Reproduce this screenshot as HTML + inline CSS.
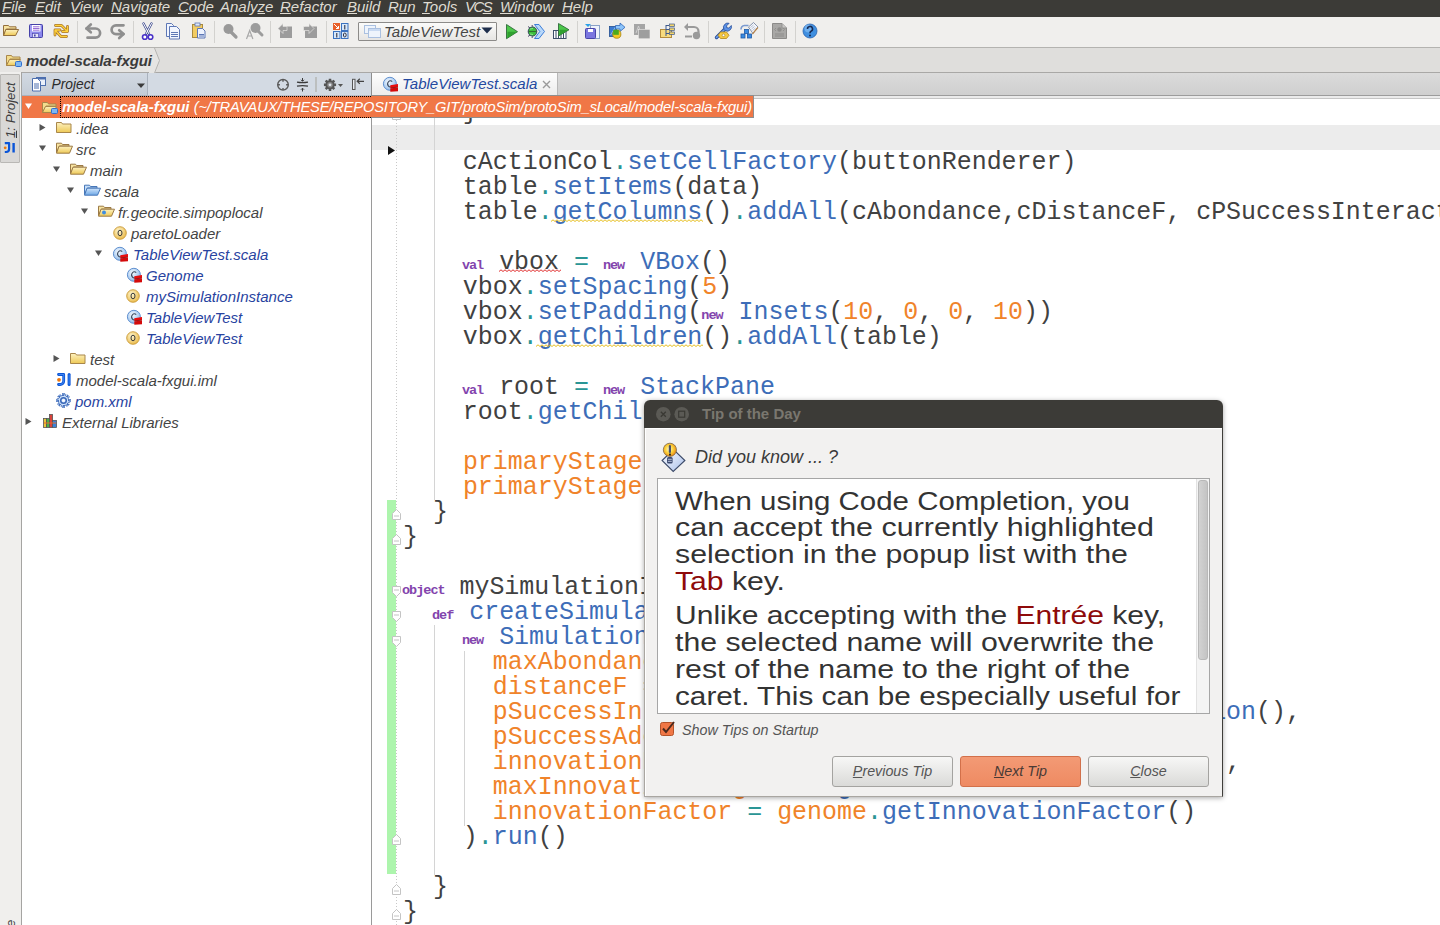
<!DOCTYPE html>
<html><head><meta charset="utf-8">
<style>
*{margin:0;padding:0;box-sizing:border-box}
html,body{width:1440px;height:925px;overflow:hidden;background:#fff;font-family:"Liberation Sans",sans-serif}
.a{position:absolute}
#menu{left:0;top:0;width:1440px;height:17px;background:#3c3b37}
#menu span{position:absolute;top:-1px;font-style:italic;font-size:15px;line-height:16px;color:#dfdbd2;white-space:nowrap}
#menu u{text-decoration:underline;text-underline-offset:1px}
#tb{left:0;top:17px;width:1440px;height:31px;background:#f0efed;border-bottom:1px solid #b4b3b0}
.sep{position:absolute;top:5px;width:1px;height:21px;background:#d6d5d2}
#bc{left:0;top:48px;width:1440px;height:25px;background:#dfdedc;border-bottom:1px solid #a9a8a6}
#strip{left:0;top:72px;width:22px;height:853px;background:#f0efed;border-right:1px solid #a5a4a2}
#ph{left:22px;top:73px;width:349px;height:23px;background:#d3dae3;border-bottom:1px solid #b7bec8}
#tabbar{left:371px;top:73px;width:1069px;height:25px;background:linear-gradient(#dbdbdb,#cfcfcf);border-bottom:3px solid #e6e6e6}
#tabbar:after{content:"";position:absolute;left:0;right:0;top:22px;height:1px;background:#9c9c9c}
#tree{left:22px;top:96px;width:350px;height:829px;background:#fff;border-right:1px solid #9a9a9a}
#editor{left:372px;top:96px;width:1068px;height:829px;background:#fff}
.cl{position:absolute;left:403px;height:25px;font-family:"Liberation Mono",monospace;font-size:24.94px;line-height:25px;white-space:pre;color:#414141}
.cl .k{position:relative;left:-1px;font-size:13.5px;font-weight:bold;letter-spacing:-1px;color:#8344ad;display:inline-block;width:21.3px}
.cl .m{color:#3d6db8}.cl .p{color:#2a9595}.cl .n,.cl .o{color:#f0832a}
.tip{position:absolute;left:675px;height:27px;font:26px/27px "Liberation Sans",sans-serif;color:#333;white-space:nowrap;transform-origin:0 0}
.tip .r{color:#8e0a0a}
.btn{position:absolute;top:756px;height:31px;border:1px solid #a4a3a0;border-radius:3px;background:linear-gradient(#f7f7f6,#dadad8);font:italic 14.3px/29px "Liberation Sans",sans-serif;color:#555;text-align:center;white-space:nowrap}
.btn.nx{background:linear-gradient(#f39a75,#ee8a62);border-color:#d2704a;color:#4a3a35}
</style></head><body>
<svg width="0" height="0" style="position:absolute">
<defs>
<linearGradient id="gy" x1="0" y1="0" x2="0" y2="1"><stop offset="0" stop-color="#fdf1c0"/><stop offset="1" stop-color="#eec956"/></linearGradient>
<linearGradient id="gb" x1="0" y1="0" x2="0" y2="1"><stop offset="0" stop-color="#cfe4fb"/><stop offset="1" stop-color="#6fa8e6"/></linearGradient>
<radialGradient id="go" cx=".4" cy=".35" r=".7"><stop offset="0" stop-color="#fff6cf"/><stop offset="1" stop-color="#e9b845"/></radialGradient>
<radialGradient id="gc" cx=".4" cy=".35" r=".7"><stop offset="0" stop-color="#f4f9ff"/><stop offset="1" stop-color="#8ab8ea"/></radialGradient>
<symbol id="fclosed" viewBox="0 0 16 12"><path d="M.5 1.5h5l1 1.5h8.5v8.5h-14.5z" fill="url(#gy)" stroke="#a9874a"/></symbol>
<symbol id="fopen" viewBox="0 0 17 12"><path d="M.5 1.2h5l1 1.3h6.5v1.5H3.5L.5 10.5z" fill="#f7e3a0" stroke="#9c7a46"/><path d="M3 4.2h13.5l-3 7h-13z" fill="url(#gy)" stroke="#9c7a46"/></symbol>
<symbol id="fblue" viewBox="0 0 17 12"><path d="M.5 1.2h5l1 1.3h6.5v1.5H3.5L.5 10.5z" fill="#c4ddf8" stroke="#4777b8"/><path d="M3 4.2h13.5l-3 7h-13z" fill="url(#gb)" stroke="#4777b8"/></symbol>
<symbol id="fpkg" viewBox="0 0 17 12"><path d="M.5 1.2h5l1 1.3h6.5v1.5H3.5L.5 10.5z" fill="#f7e3a0" stroke="#9c7a46"/><path d="M3 4.2h13.5l-3 7h-13z" fill="url(#gy)" stroke="#9c7a46"/><circle cx="6" cy="7.6" r="2" fill="#3f8de0"/></symbol>
<symbol id="fmod" viewBox="0 0 16 13"><path d="M.5 1.5h5l1 1.5h7.5v2H4L.5 11.5z" fill="#f3dc8c" stroke="#a9874a"/><path d="M3.5 5.5h11l-3 6h-11z" fill="url(#gy)" stroke="#a9874a"/><rect x="9.5" y="7.5" width="6" height="5" rx="1" fill="#7fb8f2" stroke="#2f6fd0"/></symbol>
<symbol id="iobj" viewBox="0 0 14 14"><circle cx="7" cy="7" r="6.3" fill="url(#go)" stroke="#c99a3a" stroke-width=".9"/><ellipse cx="7" cy="7" rx="2" ry="2.8" fill="none" stroke="#3a3a3a" stroke-width="1"/></symbol>
<symbol id="icls" viewBox="0 0 17 17"><circle cx="7.9" cy="7.8" r="6.5" fill="url(#gc)" stroke="#5f8fcf" stroke-width="1"/><path d="M10.2 5.6a2.7 3.1 0 1 0 0 4.6" fill="none" stroke="#3b4a5e" stroke-width="1.1"/><path d="M8.3 9.2l7.7-1.2v3.2l-7.7 1.2z" fill="#e80d0d"/><path d="M8.3 12.4l7.7-1.2v4l-7.7 .6z" fill="#d40a0a"/><path d="M9 12l6.5-1" stroke="#7a1a1a" stroke-width=".7"/></symbol>
</defs></svg>

<div id="menu" class="a">
<span style="left:2px"><u>F</u>ile</span>
<span style="left:35px"><u>E</u>dit</span>
<span style="left:70px"><u>V</u>iew</span>
<span style="left:111px"><u>N</u>avigate</span>
<span style="left:178px"><u>C</u>ode</span>
<span style="left:220px">Analy<u>z</u>e</span>
<span style="left:280px"><u>R</u>efactor</span>
<span style="left:347px"><u>B</u>uild</span>
<span style="left:388px">R<u>u</u>n</span>
<span style="left:422px"><u>T</u>ools</span>
<span style="left:465px;letter-spacing:-1.6px">VC<u>S</u></span>
<span style="left:500px"><u>W</u>indow</span>
<span style="left:562px"><u>H</u>elp</span>
</div>
<div id="tb" class="a"></div>
<svg class="a" style="left:0;top:16px" width="1440" height="30" viewBox="0 16 1440 30">
<!-- open folder -->
<path d="M3.5 25.5h5l1 1.3h6.5v2.2H6.3L3.5 35.5z" fill="#f7e3a0" stroke="#94703c"/>
<path d="M5.8 29.5h12.8l-3 6h-12z" fill="url(#gy)" stroke="#94703c"/>
<!-- save -->
<rect x="29.5" y="24.5" width="13" height="13" rx="1" fill="#8a86ec" stroke="#4541a8"/>
<path d="M31 25v12" stroke="#b8b4fa" stroke-width="1"/>
<rect x="32" y="25" width="8.5" height="6.5" fill="#fff"/>
<path d="M33 26.8h6.5M33 28.5h6.5M33 30.2h6.5" stroke="#8a5ad0" stroke-width=".9"/>
<rect x="32.5" y="33.5" width="6" height="4" fill="#e4e4f8" stroke="#4541a8" stroke-width=".6"/>
<rect x="34" y="34.5" width="1.6" height="2" fill="#4541a8"/>
<!-- sync -->
<g fill="none" stroke-linecap="round" stroke-linejoin="round">
<path d="M55.5 25.5h6l6 6M67.5 26.5v5h-5M66.5 36.5h-5.5l-6-6.5M55 35v-5h5" stroke="#a8762e" stroke-width="2.8"/>
<path d="M55.5 25.5h6l6 6M67.5 26.5v5h-5M66.5 36.5h-5.5l-6-6.5M55 35v-5h5" stroke="#ffd23a" stroke-width="1.3"/>
</g>
<rect x="77" y="21" width="1" height="22" fill="#d3d2cf"/>
<!-- undo -->
<g fill="none" stroke="#8f8f8f" stroke-width="2.7" stroke-linecap="round" stroke-linejoin="round">
<path d="M86.5 28.5h9a4.6 4.6 0 0 1 0 9.2h-8"/><path d="M90.8 24.5l-4.3 4 4.3 3.8"/>
</g>
<!-- redo -->
<g fill="none" stroke="#8f8f8f" stroke-width="2.7" stroke-linecap="round" stroke-linejoin="round">
<path d="M123.5 25.3h-7.5a4.3 4.3 0 0 0 0 8.8h7.5"/><path d="M119.2 30.3l4.3 3.8-4.3 3.9"/>
</g>
<rect x="133" y="21" width="1" height="22" fill="#d3d2cf"/>
<!-- cut -->
<path d="M143.5 23.5l5.5 10.5M151.5 23.5l-5.5 10.5" stroke="#3d4a8e" stroke-width="2.4" stroke-linecap="round" fill="none"/>
<path d="M143.5 23.5l5.5 10.5M151.5 23.5l-5.5 10.5" stroke="#fff" stroke-width="1" stroke-linecap="round" fill="none"/>
<circle cx="144.8" cy="37" r="2.3" fill="#fff" stroke="#4a32c8" stroke-width="1.6"/><circle cx="150.5" cy="37" r="2.3" fill="#fff" stroke="#4a32c8" stroke-width="1.6"/>
<!-- copy -->
<path d="M166.5 23.5h5l2 2v11h-7z" fill="#f2f6ff" stroke="#5d77b5"/>
<path d="M169.5 26.5h7l3 3v9.5h-10z" fill="#f2f6ff" stroke="#5d77b5"/>
<path d="M171 32.5h7M171 34.5h7M171 36.5h7" stroke="#5d77b5"/>
<!-- paste -->
<rect x="192.5" y="24.5" width="10" height="13" fill="#f2cc63" stroke="#a98a3e"/>
<rect x="195" y="23" width="5" height="3" fill="#dfe8f6" stroke="#5d77b5" stroke-width=".8"/>
<path d="M197.5 28.5h5l2.5 2.5v7h-7.5z" fill="#eef3ff" stroke="#5d77b5"/>
<path d="M199 34.5h5M199 36h5" stroke="#5d77b5"/>
<rect x="214" y="21" width="1" height="22" fill="#d3d2cf"/>
<!-- find -->
<circle cx="228.5" cy="29" r="5" fill="#999"/><path d="M231 32l5 5" stroke="#999" stroke-width="3.2" stroke-linecap="round"/>
<!-- replace -->
<circle cx="255.5" cy="28" r="5" fill="#9c9c9c"/><path d="M258 31l4 4" stroke="#9c9c9c" stroke-width="3" stroke-linecap="round"/>
<path d="M246.5 39l3.2-8.5 3.2 8.5M247.8 36h3.8" stroke="#a8a8a8" fill="none" stroke-width="1.2"/>
<rect x="270" y="21" width="1" height="22" fill="#d3d2cf"/>
<!-- back -->
<rect x="280" y="26.5" width="12" height="11.5" fill="#9c9c9c"/>
<path d="M278 28.5l5-5v3h4v4h-4v3z" fill="#9c9c9c" stroke="#f0efed" stroke-width=".6"/>
<!-- forward -->
<rect x="305" y="26.5" width="12" height="11.5" fill="#9c9c9c"/>
<path d="M314 28.5l-5-5v3h-5.5v4h5.5v3z" fill="#9c9c9c" stroke="#f0efed" stroke-width=".6"/>
<rect x="326" y="21" width="1" height="22" fill="#d3d2cf"/>
<!-- structure -->
<rect x="333" y="23" width="7" height="7" fill="#e8602a"/><path d="M334 24l4.5 4.5M338.5 26v2.5h-2.5" stroke="#fff" stroke-width="1" fill="none"/>
<rect x="341.5" y="23.5" width="6.5" height="7" fill="#d6e8fb" stroke="#3a72c0"/>
<rect x="333.5" y="31.5" width="6.5" height="7" fill="#d6e8fb" stroke="#3a72c0"/>
<rect x="341.5" y="31.5" width="6.5" height="7" fill="#d6e8fb" stroke="#3a72c0"/>
<path d="M344.8 25v4.5M336.8 33v4.5" stroke="#223" stroke-width="1"/>
<ellipse cx="344.8" cy="35" rx="1.4" ry="2" fill="none" stroke="#223" stroke-width=".9"/>
<!-- run -->
<path d="M506.5 24.5l11 7.2-11 7z" fill="#4cc64a" stroke="#2f6a3a" stroke-width=".9" stroke-linejoin="round"/><path d="M507.5 31.7h9.5l-9.5 6.3z" fill="#2fa02f"/>
<!-- debug -->
<path d="M534.5 24.5h4.5l5.5 7-5.5 7h-4.5l5.3-7z" fill="#b8d8fa" stroke="#3d7ed8" stroke-width="1"/>
<path d="M528 26.5l2 1.5M528 36.5l2-1.5M532 25l.5 1.5M532 38l.5-1.5" stroke="#3a3a5a" stroke-width=".9"/>
<ellipse cx="532.5" cy="31.5" rx="4.3" ry="4.6" fill="#3cbf3c" stroke="#2c3a5a" stroke-width=".9"/>
<path d="M528.5 31.5h8" stroke="#2c5a2c" stroke-width=".8"/><path d="M530 29l3-.5M530 34l3 .5" stroke="#9af09a" stroke-width=".8"/>
<!-- coverage -->
<rect x="553.5" y="30.5" width="12.5" height="8" fill="#fff" stroke="#3d4f6a"/>
<path d="M556 30.5v8M558.5 30.5v8M561 30.5v8M563.5 30.5v8" stroke="#3d4f6a" stroke-width="1"/>
<path d="M558.5 23.5l10.5 6.3-10.5 6.2z" fill="#4cc64a" stroke="#2f6a3a" stroke-width=".9" stroke-linejoin="round"/><path d="M559.5 29.8h9l-9 5.5z" fill="#2fa02f"/>
<rect x="577" y="21" width="1" height="22" fill="#d3d2cf"/>
<!-- 24 -->
<rect x="590.5" y="25.5" width="9" height="13" fill="#eef3fb" stroke="#8aa2c8"/>
<rect x="585.5" y="28.5" width="10" height="10" rx="1" fill="#7a76e0" stroke="#4845a8"/>
<rect x="588" y="29" width="5" height="3" fill="#fff"/>
<path d="M585 24h6l-3 3z" fill="#2aa0e8"/>
<!-- 25 -->
<rect x="609.5" y="26.5" width="7" height="10" fill="#3a7ad0" stroke="#234f90" stroke-width=".8"/>
<path d="M610.5 35l5-8" stroke="#8ab8f0" stroke-width="1"/>
<path d="M615.5 25.5h4.5v-2.5l5 4.3-5 4.2v-2.5h-4.5z" fill="#8cc4fa" stroke="#2f66b8" stroke-width=".8" stroke-linejoin="round"/>
<circle cx="616.8" cy="34.2" r="4.1" fill="#f3c824" stroke="#a88412" stroke-width=".8"/>
<rect x="613.2" y="29.8" width="5.6" height="5" fill="#4aaa1e"/>
<!-- 26 gray -->
<rect x="634" y="24" width="11" height="11" fill="#a5a5a5"/>
<path d="M636 33l2.5-7 2.5 7" stroke="#d8d8d8" stroke-width=".8" fill="none"/>
<rect x="638.3" y="29.3" width="11.7" height="9.5" fill="#9e9e9e" stroke="#f0efed" stroke-width=".6"/>
<!-- 27 hierarchy folder -->
<rect x="660.5" y="29.5" width="11" height="8" fill="#f7db7e" stroke="#b48c3c"/>
<path d="M666 25v11M666 25.5h3M666 29.5h3M666 33.5h3" stroke="#3d5a8f" stroke-width="1"/>
<rect x="669.5" y="24" width="5" height="2.5" fill="#f3d46a" stroke="#3d5a8f" stroke-width=".7"/>
<rect x="669.5" y="28" width="5" height="2.5" fill="#f3d46a" stroke="#3d5a8f" stroke-width=".7"/>
<rect x="669.5" y="32" width="5" height="2.5" fill="#f3d46a" stroke="#3d5a8f" stroke-width=".7"/>
<!-- 28 gray arrow -->
<path d="M686 27h8a4.5 4.5 0 0 1 4.5 4.5v2" fill="none" stroke="#9a9a9a" stroke-width="2.2"/>
<path d="M684 27l4-4v8z" fill="#9a9a9a"/><path d="M685 36.5h7" stroke="#9a9a9a" stroke-width="2"/>
<circle cx="696.5" cy="35.5" r="3.7" fill="#9a9a9a"/>
<rect x="708" y="21" width="1" height="22" fill="#d3d2cf"/>
<!-- wrench -->
<path d="M716.5 37.5l9-9" stroke="#2a4f9a" stroke-width="3.4" stroke-linecap="round"/>
<path d="M716.5 37.5l9-9" stroke="#6ea0ec" stroke-width="1.6" stroke-linecap="round"/>
<path d="M724 29.5a4.2 4.2 0 0 1 .8-5.2 4.2 4.2 0 0 1 4.3-1l-2.6 2.6.4 1.8 1.8.4 2.6-2.6a4.2 4.2 0 0 1-1 4.3 4.2 4.2 0 0 1-5.2.8z" fill="#5c92e6" stroke="#2a4f9a" stroke-width=".8"/>
<path d="M720.5 32h6l2.5 3.3-2.5 3.2h-6l-2.5-3.2z" fill="#f5c842" stroke="#b0841a" stroke-width=".8"/>
<circle cx="723.5" cy="35.3" r="1.3" fill="#fff" stroke="#8a6a1a" stroke-width=".5"/>
<!-- 31 -->
<path d="M741 29.5a4 4 0 0 1 3.5-4h4" fill="none" stroke="#7a9ad0" stroke-width="1.6"/>
<path d="M748.5 27l5-4.5 4.5 4.5-5 6.5z" fill="#f4f6fb" stroke="#6a7a98" stroke-width=".8"/>
<path d="M752 33.5l5.5-6.5 .8 1-5.5 6.5z" fill="#b8844a"/>
<path d="M750.5 27.5l3-2.5M751.5 29l3-2.5M752.5 30.5l3-2.5" stroke="#8a9ab8" stroke-width=".6"/>
<rect x="744.5" y="29.5" width="4" height="4" fill="#3a8ae0" stroke="#1f5aa8" stroke-width=".8"/>
<rect x="741" y="34" width="4" height="4" fill="#3a8ae0" stroke="#1f5aa8" stroke-width=".8"/>
<rect x="747.5" y="34" width="4" height="4" fill="#3a8ae0" stroke="#1f5aa8" stroke-width=".8"/>
<rect x="764" y="21" width="1" height="22" fill="#d3d2cf"/>
<!-- 33 doc gray -->
<path d="M772.5 23.5h9.5l4.5 4.5v10.5h-14z" fill="#a9a8a6" stroke="#8c8b89"/>
<path d="M782 23.5v4.5h4.5" fill="#c8c7c5" stroke="#8c8b89" stroke-width=".8"/>
<circle cx="779.5" cy="29.5" r="2.2" fill="#8d8c8a"/><path d="M776 28l-1.5 1.5 1.5 1.5M783 28l1.5 1.5-1.5 1.5" stroke="#8d8c8a" stroke-width=".8" fill="none"/>
<path d="M775 34h9M775 36h9" stroke="#8d8c8a"/>
<rect x="795" y="21" width="1" height="22" fill="#d3d2cf"/>
<!-- help -->
<circle cx="810" cy="31" r="7" fill="#3f8fe0" stroke="#2a63b0" stroke-width=".8"/>
<circle cx="808.5" cy="28.5" r="4" fill="#8dc4f6" opacity=".6"/>
<path d="M807.5 29a2.5 2.5 0 1 1 3.5 2.2c-1 .5-1 1-1 2" fill="none" stroke="#152a55" stroke-width="1.6"/>
<circle cx="810" cy="35.5" r="1" fill="#152a55"/>
</svg>
<div class="a" style="left:358px;top:22px;width:139px;height:19px;border:1px solid #8c8b89;border-radius:1px;background:linear-gradient(#fbfbfa,#e6e5e3)"></div>
<svg class="a" style="left:363px;top:24px" width="20" height="15" viewBox="0 0 20 15"><rect x="1.5" y="1.5" width="11" height="8" fill="#eef4fc" stroke="#aac0e0"/><rect x="5.5" y="4.5" width="12" height="9" fill="#eef4fc" stroke="#aac0e0"/><rect x="6" y="5" width="11" height="2" fill="#c9daf2"/></svg>
<div class="a" style="left:384px;top:22px;font-style:italic;font-size:15px;line-height:19px;color:#464646">TableViewTest</div>
<svg class="a" style="left:481px;top:27px" width="12" height="8"><path d="M0.5 0.5h11l-5.5 6z" fill="#1e2e4c"/></svg>

<div id="bc" class="a"></div>
<div class="a" style="left:0;top:48px;width:155px;height:24px;background:#e6e5e3"></div>
<svg class="a" style="left:148.5px;top:48px" width="12" height="25"><path d="M0 0l6 0 5 12.5-5 12.5h-6z" fill="#e6e5e3"/><path d="M5.5 0l5 12.5-5 12.5" fill="none" stroke="#b5b4b1"/></svg>
<svg class="a" style="left:6px;top:54px" width="17" height="14"><use href="#fmod" width="16" height="13"/></svg>
<div class="a" style="left:26px;top:51px;font:italic bold 15px/20px 'Liberation Sans',sans-serif;color:#3b3b3b;letter-spacing:-.1px">model-scala-fxgui</div>

<div id="strip" class="a"></div>
<div class="a" style="left:0;top:74px;width:20px;height:89px;background:#d9d8d6;border:1px solid #b9b8b5;border-radius:1px"></div>
<div class="a" style="left:1.5px;top:137.5px;width:60px;height:17px;transform-origin:0 0;transform:rotate(-90deg);font:italic 13.2px/17px 'Liberation Sans',sans-serif;color:#3c3c3c;white-space:nowrap"><u>1</u>: Project</div>
<svg class="a" style="left:3px;top:141px" width="14" height="14" viewBox="0 0 14 14"><path d="M1.8 2.2h4.3v5.8a3 3 0 0 1-3 3H1.8" fill="none" stroke="#0a55d8" stroke-width="2.2" stroke-linejoin="round"/><path d="M10.6 2v9.5" stroke="#0a55d8" stroke-width="2.4"/><circle cx="2.2" cy="6.8" r="1.4" fill="#f0780a"/></svg>
<div class="a" style="left:1.5px;top:927px;width:60px;height:17px;transform-origin:0 0;transform:rotate(-90deg);font:italic 13.2px/17px 'Liberation Sans',sans-serif;color:#3c3c3c;white-space:nowrap">e</div>

<div id="ph" class="a"></div>
<div class="a" style="left:22px;top:73px;width:126px;height:23px;background:linear-gradient(#d2d9e2,#c4ccd6);border-right:1px solid #aab2bd;border-bottom:1px solid #aab2bd"></div>
<svg class="a" style="left:31px;top:76px" width="16" height="16" viewBox="0 0 16 16"><rect x="5.5" y="1.5" width="9" height="8" fill="#eaf0fa" stroke="#4d6fae"/><rect x="5.5" y="1.5" width="9" height="2" fill="#4d6fae"/><path d="M1.5 2.5h5l3 3v9.5h-8z" fill="#fff" stroke="#4d6fae"/><path d="M3 8h5M3 10h5M3 12h5" stroke="#4d6fae"/></svg>
<div class="a" style="left:51.5px;top:75px;font:italic 13.8px/20px 'Liberation Sans',sans-serif;color:#2b2b2b">Project</div>
<svg class="a" style="left:137px;top:82.5px" width="9" height="6"><path d="M0 .5h8l-4 4.5z" fill="#3a3a3a"/></svg>
<svg class="a" style="left:274px;top:76px" width="95" height="18" viewBox="274 76 95 18">
<circle cx="283" cy="84.8" r="5.3" fill="none" stroke="#5a5a5a" stroke-width="1.4"/><path d="M283 79.5v2.2M283 87.9v2.2M277.7 84.8h2.2M286.1 84.8h2.2" stroke="#5a5a5a" stroke-width="1.4"/>
<path d="M297 82.2q5.5 1 11 0M297 86.2q5.5 -1 11 0" fill="none" stroke="#3a3a3a" stroke-width="1.3"/>
<path d="M302.5 78v3.2M301 79.8l1.5 1.5 1.5-1.5M302.5 91.5v-3.2M301 89.7l1.5-1.5 1.5 1.5" fill="none" stroke="#3a3a3a" stroke-width="1"/>
<rect x="315.5" y="77" width="1" height="15" fill="#a6a49c"/>
<path d="M336.08 83.57 L336.08 86.03 L334.39 86.16 L334.06 86.96 L335.17 88.23 L333.43 89.97 L332.15 88.87 L331.34 89.20 L331.23 90.88 L328.77 90.88 L328.64 89.19 L327.84 88.86 L326.57 89.97 L324.83 88.23 L325.93 86.95 L325.60 86.14 L323.92 86.03 L323.92 83.57 L325.61 83.44 L325.94 82.64 L324.83 81.37 L326.57 79.63 L327.85 80.73 L328.66 80.40 L328.77 78.72 L331.23 78.72 L331.36 80.41 L332.16 80.74 L333.43 79.63 L335.17 81.37 L334.07 82.65 L334.40 83.46z" fill="#555"/><circle cx="330" cy="84.8" r="2.8" fill="#888"/><circle cx="330" cy="84.8" r="1.4" fill="#dfe4ec"/>
<path d="M338 84h5l-2.5 3z" fill="#555"/>
<rect x="352.5" y="79.3" width="2.5" height="10.2" fill="#e8ecf2" stroke="#555" stroke-width="1"/>
<path d="M357 81.3h7M359.8 78.8l-2.6 2.5 2.6 2.5" fill="none" stroke="#444" stroke-width="1.2"/>
</svg>

<div id="tabbar" class="a"></div>
<div class="a" style="left:371px;top:73px;width:187px;height:24px;background:linear-gradient(#fdfdfd,#ececec);border-left:1px solid #8e8e8e;border-right:1px solid #b8b8b8;border-bottom:1px solid #9c9c9c"></div>
<svg class="a" style="left:382px;top:76px" width="17" height="17"><use href="#icls" width="17" height="17"/></svg>
<div class="a" style="left:402px;top:74px;font:italic 15px/20px 'Liberation Sans',sans-serif;color:#2449a0">TableViewTest.scala</div>
<svg class="a" style="left:542px;top:80px" width="9" height="9"><path d="M1 1l7 7M8 1l-7 7" stroke="#9a9a9a" stroke-width="1.4"/></svg>

<div id="tree" class="a"></div>
<div id="editor" class="a"></div>
<!--EDITOR-->
<div class="a" style="left:558px;top:96px;width:882px;height:2px;background:#ebebeb"></div><div class="a" style="left:558px;top:98px;width:882px;height:1px;background:#c6c6c6"></div>
<div class="a" style="left:372px;top:125px;width:1068px;height:25px;background:#ececec"></div>
<div class="a" style="left:434px;top:117px;width:1px;height:383px;background:#d4d4d4"></div>
<div class="a" style="left:434px;top:625px;width:1px;height:250px;background:#d4d4d4"></div>
<div class="a" style="left:464px;top:651px;width:1px;height:175px;background:#d4d4d4"></div>
<div class="a" style="left:387px;top:500px;width:9px;height:374px;background:#adf5ad"></div>
<div class="a" style="left:396px;top:117px;width:1px;height:808px;background:repeating-linear-gradient(#c8c8c8 0 1px,transparent 1px 3px)"></div>
<svg class="a" style="left:391px;top:509px" width="11" height="11"><path d="M1.5 10.5v-6l4-4 4 4v6z" fill="#fff" stroke="#c4c4c4"/><path d="M3 7h5" stroke="#c4c4c4"/></svg>
<svg class="a" style="left:391px;top:534px" width="11" height="11"><path d="M1.5 10.5v-6l4-4 4 4v6z" fill="#fff" stroke="#c4c4c4"/><path d="M3 7h5" stroke="#c4c4c4"/></svg>
<svg class="a" style="left:391px;top:834px" width="11" height="11"><path d="M1.5 10.5v-6l4-4 4 4v6z" fill="#fff" stroke="#c4c4c4"/><path d="M3 7h5" stroke="#c4c4c4"/></svg>
<svg class="a" style="left:391px;top:884px" width="11" height="11"><path d="M1.5 10.5v-6l4-4 4 4v6z" fill="#fff" stroke="#c4c4c4"/><path d="M3 7h5" stroke="#c4c4c4"/></svg>
<svg class="a" style="left:391px;top:909px" width="11" height="11"><path d="M1.5 10.5v-6l4-4 4 4v6z" fill="#fff" stroke="#c4c4c4"/><path d="M3 7h5" stroke="#c4c4c4"/></svg>
<svg class="a" style="left:391px;top:586px" width="11" height="11"><path d="M1.5 .5v6l4 4 4-4v-6z" fill="#fff" stroke="#c4c4c4"/><path d="M3 4h5" stroke="#c4c4c4"/></svg>
<svg class="a" style="left:391px;top:611px" width="11" height="11"><path d="M1.5 .5v6l4 4 4-4v-6z" fill="#fff" stroke="#c4c4c4"/><path d="M3 4h5" stroke="#c4c4c4"/></svg>
<svg class="a" style="left:391px;top:636px" width="11" height="11"><path d="M1.5 .5v6l4 4 4-4v-6z" fill="#fff" stroke="#c4c4c4"/><path d="M3 4h5" stroke="#c4c4c4"/></svg>
<svg class="a" style="left:391px;top:109px" width="11" height="11"><path d="M1.5 10.5v-6l4-4 4 4v6z" fill="#fff" stroke="#c4c4c4"/></svg>
<svg class="a" style="left:388px;top:146px" width="8" height="10"><path d="M0 0l7 4.5-7 4.5z" fill="#111"/></svg>
<div class="cl" style="top:100px"><span class="d">    }</span></div>
<div class="cl" style="top:150px"><span class="d">    cActionCol</span><span class="p">.</span><span class="m">setCellFactory</span><span class="d">(buttonRenderer)</span></div>
<div class="cl" style="top:175px"><span class="d">    table</span><span class="p">.</span><span class="m">setItems</span><span class="d">(data)</span></div>
<div class="cl" style="top:200px"><span class="d">    table</span><span class="p">.</span><span class="m">getColumns</span><span class="d">()</span><span class="p">.</span><span class="m">addAll</span><span class="d">(cAbondance,cDistanceF, cPSuccessInteraction, cAction)</span></div>
<div class="cl" style="top:250px"><span class="d">    </span><span class="k">val</span><span class="d"> vbox </span><span class="p">=</span><span class="d"> </span><span class="k">new</span><span class="d"> </span><span class="m">VBox</span><span class="d">()</span></div>
<div class="cl" style="top:275px"><span class="d">    vbox</span><span class="p">.</span><span class="m">setSpacing</span><span class="d">(</span><span class="n">5</span><span class="d">)</span></div>
<div class="cl" style="top:300px"><span class="d">    vbox</span><span class="p">.</span><span class="m">setPadding</span><span class="d">(</span><span class="k">new</span><span class="d"> </span><span class="m">Insets</span><span class="d">(</span><span class="n">10</span><span class="d">, </span><span class="n">0</span><span class="d">, </span><span class="n">0</span><span class="d">, </span><span class="n">10</span><span class="d">))</span></div>
<div class="cl" style="top:325px"><span class="d">    vbox</span><span class="p">.</span><span class="m">getChildren</span><span class="d">()</span><span class="p">.</span><span class="m">addAll</span><span class="d">(table)</span></div>
<div class="cl" style="top:375px"><span class="d">    </span><span class="k">val</span><span class="d"> root </span><span class="p">=</span><span class="d"> </span><span class="k">new</span><span class="d"> </span><span class="m">StackPane</span></div>
<div class="cl" style="top:400px"><span class="d">    root</span><span class="p">.</span><span class="m">getChildren</span><span class="d">()</span><span class="p">.</span><span class="m">add</span><span class="d">(vbox)</span></div>
<div class="cl" style="top:450px"><span class="d">    </span><span class="o">primaryStage</span><span class="p">.</span><span class="m">setScene</span><span class="d">(</span><span class="k">new</span><span class="d"> </span><span class="m">Scene</span><span class="d">(root, </span><span class="n">300</span><span class="d">, </span><span class="n">250</span><span class="d">))</span></div>
<div class="cl" style="top:475px"><span class="d">    </span><span class="o">primaryStage</span><span class="p">.</span><span class="m">show</span><span class="d">()</span></div>
<div class="cl" style="top:500px"><span class="d">  }</span></div>
<div class="cl" style="top:525px"><span class="d">}</span></div>
<div class="cl" style="top:575px"><span class="k" style="width:41.5px">object</span><span class="d"> mySimulationInstance {</span></div>
<div class="cl" style="top:600px"><span class="d">  </span><span class="k">def</span><span class="d"> </span><span class="m">createSimulation</span><span class="d">(genome: Genome) </span><span class="p">=</span><span class="d"> {</span></div>
<div class="cl" style="top:625px"><span class="d">    </span><span class="k">new</span><span class="d"> </span><span class="m">Simulation</span><span class="d">(</span></div>
<div class="cl" style="top:650px"><span class="d">      </span><span class="o">maxAbondance</span><span class="d"> </span><span class="p">=</span><span class="d"> </span><span class="o">genome</span><span class="p">.</span><span class="m">getMaxAbondance</span><span class="d">(),</span></div>
<div class="cl" style="top:675px"><span class="d">      </span><span class="o">distanceF</span><span class="d"> </span><span class="p">=</span><span class="d"> </span><span class="o">genome</span><span class="p">.</span><span class="m">getDistanceF</span><span class="d">(),</span></div>
<div class="cl" style="top:700px"><span class="d">      </span><span class="o">pSuccessInteraction</span><span class="d"> </span><span class="p">=</span><span class="d"> </span><span class="o">genome</span><span class="p">.</span><span class="m">getPSuccessInteraction</span><span class="d">(),</span></div>
<div class="cl" style="top:725px"><span class="d">      </span><span class="o">pSuccessAdoption</span><span class="d"> </span><span class="p">=</span><span class="d"> </span><span class="o">genome</span><span class="p">.</span><span class="m">getPSuccessAdoption</span><span class="d">(),</span></div>
<div class="cl" style="top:750px"><span class="d">      </span><span class="o">innovationProcess</span><span class="d"> </span><span class="p">=</span><span class="d"> </span><span class="o">genome</span><span class="p">.</span><span class="m">getInnovationProcess</span><span class="d">(),</span></div>
<div class="cl" style="top:775px"><span class="d">      </span><span class="o">maxInnovation</span><span class="d"> </span><span class="p">=</span><span class="d"> </span><span class="o">genome</span><span class="p">.</span><span class="m">getMaxInnovation</span></div>
<div class="cl" style="top:800px"><span class="d">      </span><span class="o">innovationFactor</span><span class="d"> </span><span class="p">=</span><span class="d"> </span><span class="o">genome</span><span class="p">.</span><span class="m">getInnovationFactor</span><span class="d">()</span></div>
<div class="cl" style="top:825px"><span class="d">    )</span><span class="p">.</span><span class="m">run</span><span class="d">()</span></div>
<div class="cl" style="top:875px"><span class="d">  }</span></div>
<div class="cl" style="top:900px"><span class="d">}</span></div>
<svg class="a" style="left:551px;top:219px" width="152" height="4"><path d="M0 2.5 L2 0.8 L4 2.5 L6 0.8 L8 2.5 L10 0.8 L12 2.5 L14 0.8 L16 2.5 L18 0.8 L20 2.5 L22 0.8 L24 2.5 L26 0.8 L28 2.5 L30 0.8 L32 2.5 L34 0.8 L36 2.5 L38 0.8 L40 2.5 L42 0.8 L44 2.5 L46 0.8 L48 2.5 L50 0.8 L52 2.5 L54 0.8 L56 2.5 L58 0.8 L60 2.5 L62 0.8 L64 2.5 L66 0.8 L68 2.5 L70 0.8 L72 2.5 L74 0.8 L76 2.5 L78 0.8 L80 2.5 L82 0.8 L84 2.5 L86 0.8 L88 2.5 L90 0.8 L92 2.5 L94 0.8 L96 2.5 L98 0.8 L100 2.5 L102 0.8 L104 2.5 L106 0.8 L108 2.5 L110 0.8 L112 2.5 L114 0.8 L116 2.5 L118 0.8 L120 2.5 L122 0.8 L124 2.5 L126 0.8 L128 2.5 L130 0.8 L132 2.5 L134 0.8 L136 2.5 L138 0.8 L140 2.5 L142 0.8 L144 2.5 L146 0.8 L148 2.5 L150 0.8 L152 2.5" fill="none" stroke="#e6be1e" stroke-width="1"/></svg>
<svg class="a" style="left:499px;top:269px" width="62" height="4"><path d="M0 2.5 L2 0.8 L4 2.5 L6 0.8 L8 2.5 L10 0.8 L12 2.5 L14 0.8 L16 2.5 L18 0.8 L20 2.5 L22 0.8 L24 2.5 L26 0.8 L28 2.5 L30 0.8 L32 2.5 L34 0.8 L36 2.5 L38 0.8 L40 2.5 L42 0.8 L44 2.5 L46 0.8 L48 2.5 L50 0.8 L52 2.5 L54 0.8 L56 2.5 L58 0.8 L60 2.5 L62 0.8" fill="none" stroke="#e03030" stroke-width="1"/></svg>
<svg class="a" style="left:536px;top:344px" width="167" height="4"><path d="M0 2.5 L2 0.8 L4 2.5 L6 0.8 L8 2.5 L10 0.8 L12 2.5 L14 0.8 L16 2.5 L18 0.8 L20 2.5 L22 0.8 L24 2.5 L26 0.8 L28 2.5 L30 0.8 L32 2.5 L34 0.8 L36 2.5 L38 0.8 L40 2.5 L42 0.8 L44 2.5 L46 0.8 L48 2.5 L50 0.8 L52 2.5 L54 0.8 L56 2.5 L58 0.8 L60 2.5 L62 0.8 L64 2.5 L66 0.8 L68 2.5 L70 0.8 L72 2.5 L74 0.8 L76 2.5 L78 0.8 L80 2.5 L82 0.8 L84 2.5 L86 0.8 L88 2.5 L90 0.8 L92 2.5 L94 0.8 L96 2.5 L98 0.8 L100 2.5 L102 0.8 L104 2.5 L106 0.8 L108 2.5 L110 0.8 L112 2.5 L114 0.8 L116 2.5 L118 0.8 L120 2.5 L122 0.8 L124 2.5 L126 0.8 L128 2.5 L130 0.8 L132 2.5 L134 0.8 L136 2.5 L138 0.8 L140 2.5 L142 0.8 L144 2.5 L146 0.8 L148 2.5 L150 0.8 L152 2.5 L154 0.8 L156 2.5 L158 0.8 L160 2.5 L162 0.8 L164 2.5 L166 0.8 L168 2.5" fill="none" stroke="#e6be1e" stroke-width="1"/></svg>
<!--/EDITOR-->
<!--TREE-->
<div class="a" style="left:22px;top:96px;width:349px;height:22px;background:#f07746"></div>
<div class="a" style="left:371px;top:95px;width:383px;height:23px;background:#f07746;border-top:1px solid #8e8e8e;border-bottom:1px solid #8e8e8e;border-right:1px solid #8e8e8e"></div>
<div class="a" style="left:60px;top:96px;width:311px;height:22px;border:1px dotted #000;border-right:none"></div>
<svg class="a" style="left:25px;top:103px" width="8" height="7"><path d="M0 .5h7l-3.5 5.5z" fill="#fff"/></svg>
<svg class="a" style="left:42px;top:101px" width="16" height="13"><use href="#fmod" width="16" height="13"/></svg>
<div class="a" style="left:62px;top:96px;font:italic 15px/21px 'Liberation Sans',sans-serif;color:#fff;white-space:nowrap"><b>model-scala-fxgui</b> <span style="font-size:14.7px;letter-spacing:-.17px">(~/TRAVAUX/THESE/REPOSITORY_GIT/protoSim/protoSim_sLocal/model-scala-fxgui)</span></div>
<svg class="a" style="left:39px;top:124px" width="8" height="8"><path d="M.5 0v7l6-3.5z" fill="#555"/></svg>
<svg class="a" style="left:56px;top:121px" width="16" height="12"><use href="#fclosed" width="16" height="12"/></svg>
<div class="a" style="left:76px;top:118px;font:italic 15px/21px 'Liberation Sans',sans-serif;color:#444;white-space:nowrap">.idea</div>
<svg class="a" style="left:39px;top:145px" width="8" height="7"><path d="M0 .5h7l-3.5 5.5z" fill="#555"/></svg>
<svg class="a" style="left:56px;top:142px" width="17" height="12"><use href="#fopen" width="17" height="12"/></svg>
<div class="a" style="left:76px;top:139px;font:italic 15px/21px 'Liberation Sans',sans-serif;color:#444;white-space:nowrap">src</div>
<svg class="a" style="left:53px;top:166px" width="8" height="7"><path d="M0 .5h7l-3.5 5.5z" fill="#555"/></svg>
<svg class="a" style="left:70px;top:163px" width="17" height="12"><use href="#fopen" width="17" height="12"/></svg>
<div class="a" style="left:90px;top:160px;font:italic 15px/21px 'Liberation Sans',sans-serif;color:#444;white-space:nowrap">main</div>
<svg class="a" style="left:67px;top:187px" width="8" height="7"><path d="M0 .5h7l-3.5 5.5z" fill="#555"/></svg>
<svg class="a" style="left:84px;top:184px" width="17" height="12"><use href="#fblue" width="17" height="12"/></svg>
<div class="a" style="left:104px;top:181px;font:italic 15px/21px 'Liberation Sans',sans-serif;color:#444;white-space:nowrap">scala</div>
<svg class="a" style="left:81px;top:208px" width="8" height="7"><path d="M0 .5h7l-3.5 5.5z" fill="#555"/></svg>
<svg class="a" style="left:98px;top:205px" width="17" height="12"><use href="#fpkg" width="17" height="12"/></svg>
<div class="a" style="left:118px;top:202px;font:italic 15px/21px 'Liberation Sans',sans-serif;color:#444;white-space:nowrap">fr.geocite.simpoplocal</div>
<svg class="a" style="left:113px;top:226px" width="14" height="14"><use href="#iobj" width="14" height="14"/></svg>
<div class="a" style="left:131px;top:223px;font:italic 15px/21px 'Liberation Sans',sans-serif;color:#444;white-space:nowrap">paretoLoader</div>
<svg class="a" style="left:95px;top:250px" width="8" height="7"><path d="M0 .5h7l-3.5 5.5z" fill="#555"/></svg>
<svg class="a" style="left:112px;top:246px" width="17" height="17"><use href="#icls" width="17" height="17"/></svg>
<div class="a" style="left:133px;top:244px;font:italic 15px/21px 'Liberation Sans',sans-serif;color:#2843a0;white-space:nowrap">TableViewTest.scala</div>
<svg class="a" style="left:126px;top:267px" width="17" height="17"><use href="#icls" width="17" height="17"/></svg>
<div class="a" style="left:146px;top:265px;font:italic 15px/21px 'Liberation Sans',sans-serif;color:#2843a0;white-space:nowrap">Genome</div>
<svg class="a" style="left:126px;top:289px" width="14" height="14"><use href="#iobj" width="14" height="14"/></svg>
<div class="a" style="left:146px;top:286px;font:italic 15px/21px 'Liberation Sans',sans-serif;color:#2843a0;white-space:nowrap">mySimulationInstance</div>
<svg class="a" style="left:126px;top:309px" width="17" height="17"><use href="#icls" width="17" height="17"/></svg>
<div class="a" style="left:146px;top:307px;font:italic 15px/21px 'Liberation Sans',sans-serif;color:#2843a0;white-space:nowrap">TableViewTest</div>
<svg class="a" style="left:126px;top:331px" width="14" height="14"><use href="#iobj" width="14" height="14"/></svg>
<div class="a" style="left:146px;top:328px;font:italic 15px/21px 'Liberation Sans',sans-serif;color:#2843a0;white-space:nowrap">TableViewTest</div>
<svg class="a" style="left:53px;top:355px" width="8" height="8"><path d="M.5 0v7l6-3.5z" fill="#555"/></svg>
<svg class="a" style="left:70px;top:352px" width="16" height="12"><use href="#fclosed" width="16" height="12"/></svg>
<div class="a" style="left:90px;top:349px;font:italic 15px/21px 'Liberation Sans',sans-serif;color:#444;white-space:nowrap">test</div>
<svg class="a" style="left:56px;top:369px" width="17" height="21" viewBox="0 0 17 21"><path d="M2.5 5.5h5.2v6.5a3.5 3.5 0 0 1-3.5 3.5H2.5" fill="none" stroke="#0a55d8" stroke-width="2.8" stroke-linecap="round" stroke-linejoin="round"/><path d="M13.1 5.5v10" stroke="#0a55d8" stroke-width="3" stroke-linecap="round"/><path d="M2.5 5.5h5.2v6.5a3.5 3.5 0 0 1-3.5 3.5H2.5M13.1 5.5v10" fill="none" stroke="#6aa8ff" stroke-width=".8" opacity=".7"/><circle cx="3" cy="10.8" r="1.9" fill="#f0780a"/></svg>
<div class="a" style="left:76px;top:370px;font:italic 15px/21px 'Liberation Sans',sans-serif;color:#444;white-space:nowrap">model-scala-fxgui.iml</div>
<svg class="a" style="left:56px;top:393px" width="15" height="15" viewBox="0 0 14 14" overflow="visible"><path d="M13.25 5.60 L13.25 8.40 L11.59 8.73 L10.05 10.84 L12.40 10.43 L10.43 12.40 L9.02 11.46 L6.44 11.87 L8.40 13.25 L5.60 13.25 L5.27 11.59 L3.16 10.05 L3.57 12.40 L1.60 10.43 L2.54 9.02 L2.13 6.44 L0.75 8.40 L0.75 5.60 L2.41 5.27 L3.95 3.16 L1.60 3.57 L3.57 1.60 L4.98 2.54 L7.56 2.13 L5.60 0.75 L8.40 0.75 L8.73 2.41 L10.84 3.95 L10.43 1.60 L12.40 3.57 L11.46 4.98 L11.87 7.56z" fill="#cfe2fa" stroke="#3a68b8" stroke-width=".9"/><circle cx="7" cy="7" r="2.6" fill="none" stroke="#3a68b8" stroke-width="1.4"/><circle cx="7" cy="7" r="1.2" fill="#fff"/></svg>
<div class="a" style="left:75px;top:391px;font:italic 15px/21px 'Liberation Sans',sans-serif;color:#2843a0;white-space:nowrap">pom.xml</div>
<svg class="a" style="left:25px;top:418px" width="8" height="8"><path d="M.5 0v7l6-3.5z" fill="#555"/></svg>
<svg class="a" style="left:43px;top:414px" width="15" height="14" viewBox="0 0 15 14"><rect x=".5" y="4.5" width="3" height="9" fill="#e8c23a" stroke="#555" stroke-width=".8"/><rect x="3.5" y="4.5" width="3" height="9" fill="#4ab04a" stroke="#555" stroke-width=".8"/><rect x="6.5" y=".5" width="3" height="13" fill="#d8433a" stroke="#555" stroke-width=".8"/><rect x="9.5" y="6.5" width="4" height="7" fill="#3a82d8" stroke="#555" stroke-width=".8"/><path d="M1 9h12" stroke="#e86a2a" stroke-width="1"/></svg>
<div class="a" style="left:62px;top:412px;font:italic 15px/21px 'Liberation Sans',sans-serif;color:#444;white-space:nowrap">External Libraries</div>
<!--/TREE-->
<!--DIALOG-->
<div class="a" style="left:644px;top:400px;width:579px;height:397px;border-radius:6px 6px 0 0;box-shadow:0 1px 5px rgba(0,0,0,.35)"></div>
<div class="a" style="left:644px;top:400px;width:579px;height:28px;background:#3c3b37;border-radius:6px 6px 0 0"></div>
<div class="a" style="left:644px;top:428px;width:579px;height:369px;background:#f2f1f0;border:1px solid #a9a6a1;border-right-color:#3f3e3a;border-top:none;box-shadow:inset 1px 1px 0 #fff"></div>
<svg class="a" style="left:654px;top:405px" width="38" height="18" viewBox="654 405 38 18">
<circle cx="663.3" cy="414.2" r="7.3" fill="#5b5a55"/><path d="M660.8 411.7l5 5M665.8 411.7l-5 5" stroke="#3a3934" stroke-width="1.3"/>
<circle cx="681.7" cy="414.2" r="7.3" fill="#5b5a55"/><rect x="678.7" y="411.2" width="6" height="6" fill="none" stroke="#3a3934" stroke-width="1.2"/>
</svg>
<div class="a" style="left:702px;top:404px;font:bold 15px/20px 'Liberation Sans',sans-serif;color:#7a776f;white-space:nowrap">Tip of the Day</div>
<svg class="a" style="left:658px;top:441px" width="30" height="32" viewBox="0 0 30 32">
<defs><linearGradient id="dg" x1="0" y1="0" x2="1" y2="1"><stop offset="0" stop-color="#fff"/><stop offset="1" stop-color="#a9bfea"/></linearGradient>
<radialGradient id="bg2" cx=".45" cy=".45" r=".6"><stop offset="0" stop-color="#fffbd0"/><stop offset=".5" stop-color="#fbd23a"/><stop offset="1" stop-color="#e97d12"/></radialGradient></defs>
<path d="M4.1 19.5l11.4-11 11.4 11-11.7 11z" fill="url(#dg)" stroke="#3c4a68" stroke-width="1.1"/>
<circle cx="11.9" cy="8.8" r="6.6" fill="url(#bg2)" stroke="#6a5a3a" stroke-width=".7"/>
<rect x="9" y="16" width="5.6" height="6.5" rx="1.5" fill="#3c4a70"/><path d="M9.8 18.3h4M9.8 20.3h4" stroke="#c8d4ec" stroke-width=".9"/>
<path d="M11.9 5v6" stroke="#4a5068" stroke-width="2.2" stroke-linecap="round"/><rect x="11" y="12.6" width="1.9" height="1.9" fill="#222"/>
</svg>
<div class="a" style="left:695px;top:446px;font:italic 18px/22px 'Liberation Sans',sans-serif;color:#3a3a3a;white-space:nowrap">Did you know ... ?</div>
<div class="a" style="left:657px;top:478px;width:553px;height:236px;background:#fff;border:1px solid #a6a6a6"></div>
<div class="a" style="left:1196px;top:479px;width:13px;height:234px;background:#f4f4f4;border-left:1px solid #e2e2e2"></div>
<div class="a" style="left:1198px;top:480px;width:10px;height:180px;border-radius:3px;background:linear-gradient(90deg,#d2d2d2,#c4c4c4);border:1px solid #b8b8b8"></div>
<div class="tip" style="top:487.5px;transform:scaleX(1.132)">When using Code Completion, you</div>
<div class="tip" style="top:514.2px;transform:scaleX(1.171)">can accept the currently highlighted</div>
<div class="tip" style="top:540.8px;transform:scaleX(1.165)">selection in the popup list with the</div>
<div class="tip" style="top:567.8px;transform:scaleX(1.159)"><span class="r">Tab</span> key.</div>
<div class="tip" style="top:601.7px;transform:scaleX(1.155)">Unlike accepting with the <span class="r">Entrée</span> key,</div>
<div class="tip" style="top:628.8px;transform:scaleX(1.163)">the selected name will overwrite the</div>
<div class="tip" style="top:655.8px;transform:scaleX(1.166)">rest of the name to the right of the</div>
<div class="tip" style="top:682.8px;transform:scaleX(1.144)">caret. This can be especially useful for</div>
<svg class="a" style="left:659px;top:721px" width="17" height="16" viewBox="0 0 17 16">
<rect x="1.5" y="1.5" width="13" height="13" rx="2" fill="#f07746" stroke="#b4532a"/>
<path d="M4 7.5l3 3.5 8-10" fill="none" stroke="#4a2a1e" stroke-width="2"/>
</svg>
<div class="a" style="left:682px;top:720px;font:italic 14.3px/20px 'Liberation Sans',sans-serif;color:#555;white-space:nowrap">Show Tips on Startup</div>
<div class="btn" style="left:832px;width:121px"><u>P</u>revious Tip</div>
<div class="btn nx" style="left:960px;width:121px"><u>N</u>ext Tip</div>
<div class="btn" style="left:1088px;width:121px"><u>C</u>lose</div>
<!--/DIALOG-->

</body></html>
